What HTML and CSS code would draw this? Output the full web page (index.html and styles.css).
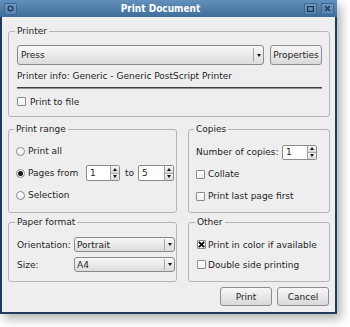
FILE: index.html
```html
<!DOCTYPE html>
<html>
<head>
<meta charset="utf-8">
<title>Print Document</title>
<link rel="stylesheet" href="styles.css">
</head>
<body>
<div class="window">
  <div class="titlebar">
    <div class="tb-btn"><svg width="7" height="7" viewBox="0 0 7 7"><circle cx="3.5" cy="3.5" r="2.4" fill="none" stroke="#1d3650" stroke-width="1.3"/></svg></div>
    <div class="title">Print Document</div>
    <div class="tb-btn"><svg width="7" height="6" viewBox="0 0 7 6"><rect x="0.6" y="0.6" width="5.8" height="4.8" fill="none" stroke="#1d3650" stroke-width="1.2"/></svg></div>
    <div class="tb-btn"><svg width="7" height="7" viewBox="0 0 7 7"><path d="M1 1L6 6M6 1L1 6" stroke="#1d3650" stroke-width="1.4"/></svg></div>
  </div>
  <div class="body">
    <fieldset class="group printer">
      <legend>Printer</legend>
      <div class="printer-row">
        <div class="combo grow"><span class="combo-text">Press</span><span class="combo-arrow"><span class="tri-down"></span></span></div>
        <div class="btn props">Properties</div>
      </div>
      <div class="info">Printer info: Generic - Generic PostScript Printer</div>
      <div class="sep"></div>
      <div class="opt-row first-check"><span class="check"></span><span>Print to file</span></div>
    </fieldset>

    <div class="pair-row mid">
      <fieldset class="group range">
        <legend>Print range</legend>
        <div class="opt-row"><span class="radio"></span><span>Print all</span></div>
        <div class="opt-row"><span class="radio on"><span class="dot"></span></span><span class="pages-label">Pages from</span>
          <div class="spin s1"><span class="spin-text">1</span><span class="spin-arrows"><span class="half"><span class="tri-up"></span></span><span class="half"><span class="tri-down"></span></span></span></div>
          <span class="to">to</span>
          <div class="spin s2"><span class="spin-text">5</span><span class="spin-arrows"><span class="half"><span class="tri-up"></span></span><span class="half"><span class="tri-down"></span></span></span></div>
        </div>
        <div class="opt-row"><span class="radio"></span><span>Selection</span></div>
      </fieldset>
      <fieldset class="group copies">
        <legend>Copies</legend>
        <div class="opt-row"><span class="copies-label">Number of copies:</span>
          <div class="spin s3"><span class="spin-text">1</span><span class="spin-arrows"><span class="half"><span class="tri-up"></span></span><span class="half"><span class="tri-down"></span></span></span></div>
        </div>
        <div class="opt-row"><span class="check"></span><span>Collate</span></div>
        <div class="opt-row"><span class="check"></span><span>Print last page first</span></div>
      </fieldset>
    </div>

    <div class="pair-row low">
      <fieldset class="group paper">
        <legend>Paper format</legend>
        <div class="form-row"><span class="form-label">Orientation:</span>
          <div class="combo grow small"><span class="combo-text">Portrait</span><span class="combo-arrow"><span class="tri-down"></span></span></div>
        </div>
        <div class="form-row"><span class="form-label">Size:</span>
          <div class="combo grow small"><span class="combo-text">A4</span><span class="combo-arrow"><span class="tri-down"></span></span></div>
        </div>
      </fieldset>
      <fieldset class="group other">
        <legend>Other</legend>
        <div class="form-row"><span class="check on"><svg width="7" height="7" viewBox="0 0 7 7"><path d="M0.8 0.8L6.2 6.2M6.2 0.8L0.8 6.2" stroke="#000" stroke-width="1.7"/></svg></span><span>Print in color if available</span></div>
        <div class="form-row"><span class="check"></span><span>Double side printing</span></div>
      </fieldset>
    </div>

    <div class="buttons">
      <div class="btn action">Print</div>
      <div class="btn action">Cancel</div>
    </div>
  </div>
</div>
</body>
</html>
```

FILE: styles.css
```css
* { box-sizing: border-box; }
html, body { margin: 0; padding: 0; background: #ffffff; }
body {
  width: 350px;
  height: 327px;
  overflow: hidden;
  font-family: "DejaVu Sans", sans-serif;
  font-size: 9px;
  color: #1e1e1e;
}
.window {
  width: 337px;
  height: 314px;
  display: flex;
  flex-direction: column;
  box-shadow: 4px 5px 10px rgba(0, 0, 0, 0.3);
}
.titlebar {
  height: 17px;
  flex: none;
  display: flex;
  align-items: center;
  gap: 4px;
  padding: 0 3px 0 4px;
  background: linear-gradient(#6290bb, #3e6e9b);
}
.tb-btn {
  width: 13px;
  height: 12px;
  flex: none;
  border: 1px solid #3c668f;
  border-radius: 1px;
  background: linear-gradient(#6f98c1, #5783ae);
  display: flex;
  align-items: center;
  justify-content: center;
}
.title {
  flex: 1;
  text-align: center;
  color: #ffffff;
  font-weight: bold;
  font-size: 10px;
  font-family: "DejaVu Sans Condensed", "DejaVu Sans", sans-serif;
  line-height: 12px;
}
.body {
  flex: 1;
  background: #eeeeee;
  border: 2px solid #1f3c5a;
  border-top: 0;
  padding: 9px 5px 0 6px;
  display: flex;
  flex-direction: column;
}
.group {
  margin: 0;
  min-width: 0;
  border: 1px solid #b5b5b5;
  border-radius: 3px;
}
.group legend {
  padding: 0 2px;
  margin-left: -2px;
  line-height: 11px;
  font-size: 9px;
}
.printer { padding: 8px 7px 9px 8px; }
.printer-row { display: flex; gap: 6px; height: 20px; }
.grow { flex: 1; min-width: 0; }
.combo {
  display: flex;
  align-items: center;
  border: 1px solid #8b8b8b;
  border-radius: 3px;
  background: linear-gradient(#f8f8f8, #dcdcdc);
}
.combo-text { flex: 1; padding-left: 3px; white-space: nowrap; }
.combo-arrow {
  width: 10px;
  align-self: stretch;
  margin: 2px 0;
  border-left: 1px solid #a5a5a5;
  display: flex;
  align-items: center;
  justify-content: center;
}
.tri-down {
  width: 0; height: 0;
  border-left: 2.5px solid transparent;
  border-right: 2.5px solid transparent;
  border-top: 3px solid #111;
}
.tri-up {
  width: 0; height: 0;
  border-left: 2.5px solid transparent;
  border-right: 2.5px solid transparent;
  border-bottom: 3px solid #111;
}
.btn {
  display: flex;
  align-items: center;
  justify-content: center;
  border: 1px solid #8d8d8d;
  border-radius: 3px;
  background: linear-gradient(#f7f7f7, #d9d9d9);
  white-space: nowrap;
}
.props { width: 52px; }
.info { margin-top: 6px; line-height: 11px; white-space: nowrap; }
.sep {
  margin-top: 5px;
  height: 2px;
  border-top: 1px solid #3f3f3f;
  border-bottom: 1px solid #8f8f8f;
}
.opt-row {
  display: flex;
  align-items: center;
  height: 16px;
  white-space: nowrap;
}
.opt-row + .opt-row { margin-top: 6px; }
.printer .first-check { margin-top: 7px; height: 11px; }
.check {
  width: 9px;
  height: 9px;
  flex: none;
  margin-right: 3px;
  border: 1px solid #8a8a8a;
  border-radius: 1px;
  background: linear-gradient(#ffffff, #f0f0f0);
  display: flex;
  align-items: center;
  justify-content: center;
}
.printer .check { margin-right: 4px; }
.radio {
  width: 9px;
  height: 9px;
  flex: none;
  margin-right: 3px;
  border: 1px solid #8a8a8a;
  border-radius: 50%;
  background: linear-gradient(#ffffff, #eeeeee);
  display: flex;
  align-items: center;
  justify-content: center;
}
.dot { width: 5px; height: 5px; border-radius: 50%; background: #111; }
.pair-row { display: flex; gap: 11px; }
.mid { margin-top: 7px; }
.low { margin-top: 4px; }
.range { width: 169px; flex: none; padding: 8px 2px 9px 7px; }
.copies { flex: 1; padding: 9px 7px 8px 7px; }
.pages-label { width: 58px; }
.spin {
  display: flex;
  height: 16px;
  border: 1px solid #8c8c8c;
  border-radius: 2px;
  background: #ffffff;
}
.s1 { width: 34px; }
.s2 { width: 36px; }
.s3 { width: 35px; height: 15px; }
.spin-text { flex: 1; padding-left: 3px; line-height: 14px; }
.s3 .spin-text { line-height: 13px; }
.spin-arrows {
  width: 9px;
  display: flex;
  flex-direction: column;
  border-left: 1px solid #a0a0a0;
}
.half {
  flex: 1;
  display: flex;
  align-items: center;
  justify-content: center;
  background: linear-gradient(#f6f6f6, #d8d8d8);
}
.half + .half { border-top: 1px solid #a8a8a8; }
.to { margin: 0 4px 0 5px; }
.copies-label { width: 86px; }
.paper { width: 169px; flex: none; padding: 9px 1px 9px 8px; }
.other { flex: 1; padding: 9px 7px 9px 8px; }
.form-row {
  display: flex;
  align-items: center;
  height: 15px;
  white-space: nowrap;
}
.form-row + .form-row { margin-top: 5px; }
.form-label { width: 57px; flex: none; }
.combo.small .combo-text { padding-left: 2px; }
.combo.small { align-self: stretch; }
.combo.small .combo-arrow { margin: 1px 0; }
.other .check { margin-right: 2px; }
.buttons {
  margin-top: 5px;
  display: flex;
  justify-content: flex-end;
  gap: 5px;
  padding-right: 1px;
}
.action { width: 52px; height: 19px; }
```
